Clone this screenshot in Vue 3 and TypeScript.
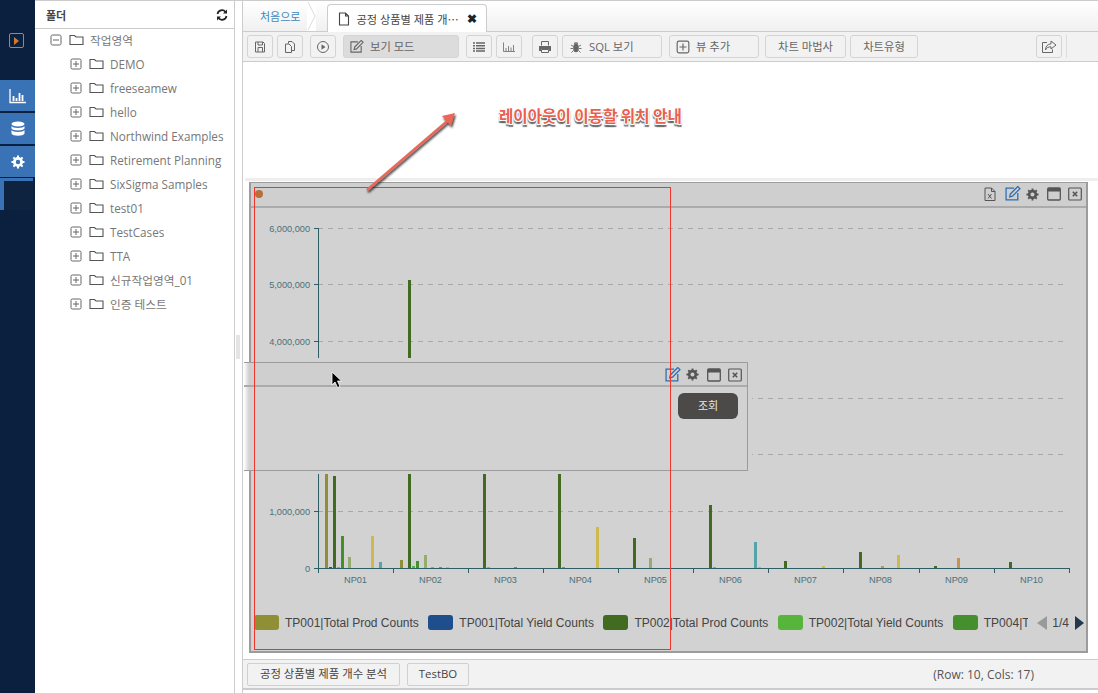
<script setup lang="ts">
interface ToolItem {
  icon?: string;
  label?: string;
  width: number;
  gap: number;
  active?: boolean;
}

interface Bar {
  x: number;
  top: number;
  color: string;
}

const children = [
  'DEMO',
  'freeseamew',
  'hello',
  'Northwind Examples',
  'Retirement Planning',
  'SixSigma Samples',
  'test01',
  'TestCases',
  'TTA',
  '신규작업영역_01',
  '인증 테스트',
];

const isKorean = (name: string) => /[가-힣]/.test(name);

const tools: ToolItem[] = [
  { icon: 'save', width: 26, gap: 4 },
  { icon: 'copy', width: 26, gap: 7 },
  { icon: 'play', width: 26, gap: 7 },
  { icon: 'edit', label: '보기 모드', width: 116, gap: 7, active: true },
  { icon: 'list', width: 26, gap: 4 },
  { icon: 'chart', width: 26, gap: 10 },
  { icon: 'print', width: 26, gap: 4 },
  { icon: 'bug', label: 'SQL 보기', width: 100, gap: 7 },
  { icon: 'plus', label: '뷰 추가', width: 90, gap: 6 },
  { label: '차트 마법사', width: 81, gap: 4 },
  { label: '차트유형', width: 68, gap: 4 },
];

const legend = [
  { name: 'TP001|Total Prod Counts', color: '#8f8f35' },
  { name: 'TP001|Total Yield Counts', color: '#1f4e8c' },
  { name: 'TP002|Total Prod Counts', color: '#426b22' },
  { name: 'TP002|Total Yield Counts', color: '#58b53c' },
  { name: 'TP004|Total Prod Counts', color: '#458f2e' },
];

const OLIVE = '#8f8f35';
const BLUE = '#1f4e8c';
const DARK = '#426b22';
const BRIGHT = '#58b53c';
const GREEN = '#458f2e';
const PALE = '#94ac70';
const YELLOW = '#cdb94e';
const TEAL = '#55a5a8';
const ORANGE = '#c8924e';
const RED = '#b8705a';

const bars: Bar[] = [
  { x: 325, top: 400, color: OLIVE },
  { x: 329, top: 567, color: BLUE },
  { x: 333, top: 476, color: DARK },
  { x: 337, top: 567, color: PALE },
  { x: 341, top: 536, color: GREEN },
  { x: 348, top: 557, color: PALE },
  { x: 371, top: 536, color: YELLOW },
  { x: 379, top: 562, color: TEAL },
  { x: 400, top: 560, color: OLIVE },
  { x: 408, top: 280, color: DARK },
  { x: 412, top: 566, color: BRIGHT },
  { x: 416, top: 561, color: GREEN },
  { x: 424, top: 555, color: PALE },
  { x: 431, top: 567, color: ORANGE },
  { x: 439, top: 567, color: RED },
  { x: 446, top: 567, color: YELLOW },
  { x: 483, top: 400, color: DARK },
  { x: 487, top: 567, color: PALE },
  { x: 514, top: 567, color: RED },
  { x: 558, top: 400, color: DARK },
  { x: 562, top: 567, color: BRIGHT },
  { x: 596, top: 527, color: YELLOW },
  { x: 633, top: 538, color: DARK },
  { x: 649, top: 558, color: PALE },
  { x: 709, top: 505, color: DARK },
  { x: 713, top: 567, color: PALE },
  { x: 754, top: 542, color: TEAL },
  { x: 758, top: 567, color: '#b8b49a' },
  { x: 784, top: 561, color: DARK },
  { x: 822, top: 566, color: YELLOW },
  { x: 859, top: 552, color: DARK },
  { x: 881, top: 566, color: ORANGE },
  { x: 897, top: 555, color: YELLOW },
  { x: 934, top: 566, color: DARK },
  { x: 957, top: 558, color: ORANGE },
  { x: 1009, top: 562, color: DARK },
];

const gridLines = [
  { y: 228, label: '6,000,000' },
  { y: 284, label: '5,000,000' },
  { y: 341, label: '4,000,000' },
  { y: 398, label: '3,000,000' },
  { y: 454, label: '2,000,000' },
  { y: 511, label: '1,000,000' },
];

const xTicks = [318, 393, 468, 543, 618, 693, 768, 843, 919, 994, 1069];
const categories = ['NP01', 'NP02', 'NP03', 'NP04', 'NP05', 'NP06', 'NP07', 'NP08', 'NP09', 'NP10'];
</script>

<template>
  <div class="app">
    <svg class="sprite" aria-hidden="true">
      <symbol id="i-save" viewBox="0 0 14 14"><path d="M2.500 2h7.500l1.500 1.500v8.500h-9z M5 2v3h4.500v-3 M5 12v-4.500h4.500v4.500" fill="none" stroke="currentColor" /></symbol>
      <symbol id="i-copy" viewBox="0 0 14 14"><path d="M5.500 3.500V1.500h3.500l2.500 2.500v6.500H9 M2.500 4h3.500l2.500 2.500V12.500H2.500z" fill="none" stroke="currentColor" /></symbol>
      <symbol id="i-play" viewBox="0 0 14 14"><circle cx="7" cy="7" r="5.500" fill="none" stroke="currentColor" /><path d="M5.500 4.300l4 2.700-4 2.700z" fill="currentColor" /></symbol>
      <symbol id="i-edit" viewBox="1 1 15 15"><path d="M9.500 3H2v11h11V7.500" fill="none" stroke="currentColor" stroke-width="1.200" /><path d="M6 8.500L13 1.500l2 2-7 7-2.600.6z" fill="none" stroke="currentColor" stroke-width="1.200" /></symbol>
      <symbol id="i-list" viewBox="0 0 14 14"><path d="M1 3h2M4 3h9M1 5.700h2M4 5.700h9M1 8.400h2M4 8.400h9M1 11h2M4 11h9" fill="none" stroke="currentColor" stroke-width="1.500" /></symbol>
      <symbol id="i-chart" viewBox="0 0 14 14"><path d="M1.500 2.500V11.500H13" fill="none" stroke="currentColor" stroke-width=".8" /><path d="M4 8v3M6.500 6v5M9 7.500v3.500M11.500 5v6" fill="none" stroke="currentColor" stroke-width=".8" /></symbol>
      <symbol id="i-print" viewBox="0 0 14 14"><path d="M3.500 5.500V1.500h7v4" fill="none" stroke="currentColor" /><path d="M1 6h12v5h-2V9H3v2H1z" fill="currentColor" /><path d="M3.500 9.500h7v3h-7z" fill="none" stroke="currentColor" /></symbol>
      <symbol id="i-bug" viewBox="0 0 14 14"><ellipse cx="7" cy="8" rx="2.800" ry="4.200" fill="currentColor" /><path d="M5.500 2.800h3v1h-3zM2 5l2.500 1.500M12 5L9.500 6.500M1.500 8.500h2.500M12.500 8.500H10M2.500 12.500l2-2M11.500 12.500l-2-2" fill="none" stroke="currentColor" stroke-width=".9" /></symbol>
      <symbol id="i-plus" viewBox="0 0 12 12"><rect x="1" y="1" width="10" height="10" rx="1.500" fill="none" stroke="currentColor" /><path d="M6 3v6M3 6h6" fill="none" stroke="currentColor" /></symbol>
      <symbol id="i-minus" viewBox="0 0 12 12"><rect x="1" y="1" width="10" height="10" rx="1.500" fill="none" stroke="currentColor" /><path d="M3 6h6" fill="none" stroke="currentColor" /></symbol>
      <symbol id="i-share" viewBox="0 0 16 14"><path d="M6 2.500H1.500V12.500H11.500V9.500" fill="none" stroke="currentColor" /><path d="M10 1l5 4-5 4V6.800C7.500 6.800 5.500 7.500 4.500 10c0-3.500 2-6 5.500-6.200z" fill="none" stroke="currentColor" /></symbol>
      <symbol id="i-folder" viewBox="0 0 15 12"><path d="M1 10.500V1.500h4.500l1.500 1.500h7v7.500z" fill="none" stroke="currentColor" stroke-width="1.100" /></symbol>
      <symbol id="i-doc" viewBox="0 0 12 14"><path d="M1.500 1h6l3 3v9h-9z M7.500 1v3h3" fill="none" stroke="currentColor" stroke-width="1.100" /></symbol>
      <symbol id="i-gear" viewBox="0 0 14 14"><circle cx="7" cy="7" r="3.600" fill="none" stroke="currentColor" stroke-width="2.800" /><path d="M7 .5v2.500M7 11v2.500M.5 7H3M11 7h2.500M2.400 2.400l1.800 1.800M9.800 9.800l1.800 1.800M2.400 11.600l1.800-1.800M9.800 4.200l1.800-1.800" fill="none" stroke="currentColor" stroke-width="2" /></symbol>
      <symbol id="i-window" viewBox="0 0 14 14"><rect x=".7" y="1" width="12.600" height="12" rx="1" fill="none" stroke="currentColor" stroke-width="1.300" /><rect x="1" y="1" width="12" height="3.500" fill="currentColor" /></symbol>
      <symbol id="i-close" viewBox="0 0 14 14"><rect x=".7" y="1" width="12.600" height="12" rx="1" fill="none" stroke="currentColor" stroke-width="1.200" /><path d="M4.800 4.800l4.400 4.400M9.200 4.800l-4.400 4.400" fill="none" stroke="currentColor" stroke-width="1.600" /></symbol>
      <symbol id="i-xls" viewBox="0 0 12 14"><path d="M1 1h6.500l3.500 3.500V13.500H1z M7.500 1v3.500H11" fill="none" stroke="currentColor" /><path d="M4 7l3.500 4.500M7.500 7L4 11.500" fill="none" stroke="currentColor" /></symbol>
    </svg>

    <aside class="rail">
      <span class="rail-toggle"><i class="rail-arrow"></i></span>
      <div class="rail-menu">
        <button class="rail-btn">
          <svg width="18" height="16" viewBox="0 0 18 16">
            <path d="M1 1v13.500h16" fill="none" stroke="#fff" stroke-width="1.300" />
            <path d="M4.500 8v5M7.500 10v3M10.500 5v8M13.500 7v6" fill="none" stroke="#fff" stroke-width="1.800" />
          </svg>
        </button>
        <button class="rail-btn">
          <svg width="14" height="16" viewBox="0 0 14 16">
            <ellipse cx="7" cy="3" rx="6.500" ry="2.500" fill="#fff" />
            <path d="M.5 5c1 2.500 12 2.500 13 0v2.500c-1 2.500-12 2.500-13 0zM.5 9c1 2.500 12 2.500 13 0v3.500c-1 3-12 3-13 0z" fill="#fff" />
          </svg>
        </button>
        <button class="rail-btn rail-gear">
          <svg width="14" height="14"><use href="#i-gear" /></svg>
        </button>
        <div class="rail-last"><span></span></div>
      </div>
    </aside>

    <section class="tree">
      <header class="tree-head">
        <strong>폴더</strong>
        <svg width="12" height="12" viewBox="0 0 12 12" class="refresh">
          <path d="M1.500 5A4.500 4.500 0 0 1 9.500 3M10.500 7A4.500 4.500 0 0 1 2.500 9" fill="none" stroke="#222" stroke-width="1.700" />
          <path d="M11 .5V4.500H7zM1 11.500V7.500H5z" fill="#222" />
        </svg>
      </header>
      <div class="node root-node">
        <svg class="box" width="12" height="12"><use href="#i-minus" /></svg>
        <svg class="folder" width="15" height="12"><use href="#i-folder" /></svg>
        <span class="ko">작업영역</span>
      </div>
      <div v-for="name in children" :key="name" class="node child-node">
        <svg class="box" width="12" height="12"><use href="#i-plus" /></svg>
        <svg class="folder" width="15" height="12"><use href="#i-folder" /></svg>
        <span :class="{ ko: isKorean(name) }">{{ name }}</span>
      </div>
    </section>

    <div class="splitter"><i></i></div>

    <main class="main">
      <nav class="tabs">
        <a class="home">처음으로</a>
        <svg class="crumb" width="9" height="30" viewBox="0 0 9 30">
          <path d="M1 1l7 14-7 14" fill="none" stroke="#ddd" />
        </svg>
        <div class="tab">
          <svg width="12" height="14"><use href="#i-doc" /></svg>
          <span>공정 상품별 제품 개⋯</span>
          <b>✖</b>
        </div>
      </nav>

      <div class="toolbar">
        <button
          v-for="(t, i) in tools"
          :key="i"
          class="tool"
          :class="{ active: t.active, labelled: t.icon && t.label, centered: !t.icon }"
          :style="{ width: t.width + 'px', marginRight: t.gap + 'px' }"
        >
          <svg v-if="t.icon" width="14" height="14"><use :href="'#i-' + t.icon" /></svg>
          <span v-if="t.label">{{ t.label }}</span>
        </button>
        <span class="spacer"></span>
        <button class="tool share">
          <svg width="16" height="14"><use href="#i-share" /></svg>
        </button>
        <i class="tool-sep"></i>
      </div>

      <div class="drop-area"></div>
      <div class="band"></div>

      <section class="panel">
        <header class="panel-head">
          <i class="dot"></i>
          <span class="spacer"></span>
          <svg class="ic-xls" width="12" height="14"><use href="#i-xls" /></svg>
          <svg class="ic-edit" width="16" height="16"><use href="#i-edit" /></svg>
          <svg class="ic-gear" width="13" height="13"><use href="#i-gear" /></svg>
          <svg class="ic-win" width="14" height="14"><use href="#i-window" /></svg>
          <svg class="ic-close" width="14" height="14"><use href="#i-close" /></svg>
        </header>

        <svg class="chart" width="835" height="392" viewBox="251 208 835 392">
          <g v-for="g in gridLines" :key="g.y">
            <line x1="318" x2="1066" :y1="g.y + 0.5" :y2="g.y + 0.5" stroke="#a8a8a8" stroke-dasharray="5 5" />
            <line x1="314" x2="318" :y1="g.y + 0.5" :y2="g.y + 0.5" stroke="#2e5d64" />
            <text x="310" :y="g.y + 3.500" text-anchor="end" class="axis-text">{{ g.label }}</text>
          </g>
          <text x="310" y="571.500" text-anchor="end" class="axis-text">0</text>
          <line x1="314" x2="318" y1="568.500" y2="568.500" stroke="#2e5d64" />
          <line x1="318.500" x2="318.500" y1="228" y2="568" stroke="#2e5d64" />
          <rect
            v-for="b in bars"
            :key="b.x"
            :x="b.x"
            :y="b.top"
            width="3"
            :height="568 - b.top"
            :fill="b.color"
          />
          <line x1="318" x2="1070" y1="568.500" y2="568.500" stroke="#2e5d64" />
          <line v-for="t in xTicks" :key="t" :x1="t + 0.5" :x2="t + 0.5" y1="568" y2="573" stroke="#2e5d64" />
          <text v-for="(c, i) in categories" :key="c" :x="xTicks[i] + 37.500" y="583" text-anchor="middle" class="axis-text">{{ c }}</text>
          <!-- area the dragged window clears out -->
          <rect x="251" y="358" width="501" height="116" fill="#d2d2d2" />
        </svg>

        <footer class="legend">
          <div class="legend-track">
            <div v-for="l in legend" :key="l.color" class="legend-item">
              <i :style="{ background: l.color }"></i>
              <span>{{ l.name }}</span>
            </div>
          </div>
          <div class="pager">
            <i class="arrow-left"></i>
            <span>1/4</span>
            <i class="arrow-right"></i>
          </div>
        </footer>
      </section>

      <div class="status">
        <button class="sheet first">공정 상품별 제품 개수 분석</button>
        <button class="sheet second">TestBO</button>
        <span class="spacer"></span>
        <span class="count">(Row: 10, Cols: 17)</span>
      </div>
    </main>

    <!-- things floating over the page while a layout is being dragged -->
    <div class="drag-window">
      <header class="drag-head">
        <span class="spacer"></span>
        <svg class="ic-edit" width="16" height="16"><use href="#i-edit" /></svg>
        <svg class="ic-gear" width="13" height="13"><use href="#i-gear" /></svg>
        <svg class="ic-win" width="14" height="14"><use href="#i-window" /></svg>
        <svg class="ic-close" width="14" height="14"><use href="#i-close" /></svg>
      </header>
      <button class="query">조회</button>
    </div>
    <div class="drop-guide"></div>
    <svg class="pointer" width="13" height="18" viewBox="0 0 13 18">
      <path d="M1 1v13l3-3 2.500 5.500 2.500-1-2.500-5.500H10.500z" fill="#000" stroke="#fff" stroke-width=".8" />
    </svg>
    <svg class="callout-arrow" width="100" height="90" viewBox="0 0 100 90">
      <defs>
        <filter id="drop" x="-20%" y="-20%" width="150%" height="150%">
          <feDropShadow dx="1" dy="2" stdDeviation=".8" flood-color="#222" flood-opacity=".9" />
        </filter>
      </defs>
      <g filter="url(#drop)">
        <path d="M3 84L88 11" stroke="#e8685a" stroke-width="2.500" fill="none" />
        <path d="M91 7L87 20 78 10z" fill="#e8685a" />
      </g>
    </svg>
    <div class="callout-text">레이아웃이 이동할 위치 안내</div>
  </div>
</template>

<style scoped>
.app {
  position: relative;
  display: flex;
  width: 1098px;
  height: 693px;
  overflow: hidden;
  background: #fff;
  font-family: "Open Sans", "Noto Sans CJK KR", sans-serif;
  font-size: 12px;
  color: #555;
}

.sprite {
  position: absolute;
  width: 0;
  height: 0;
}

.spacer {
  flex: 1;
}

button {
  font-family: inherit;
  padding: 0;
}

/* left rail */
.rail {
  flex: 0 0 35px;
  background: #0b1f3f;
  padding-top: 33px;
  box-sizing: border-box;
}

.rail-toggle {
  display: flex;
  align-items: center;
  justify-content: center;
  width: 15px;
  height: 15px;
  margin-left: 9px;
  border: 1.5px solid #d07a30;
  border-radius: 2px;
  box-sizing: border-box;
}

.rail-arrow {
  width: 0;
  height: 0;
  border-left: 5px solid #d07a30;
  border-top: 4px solid transparent;
  border-bottom: 4px solid transparent;
}

.rail-menu {
  margin-top: 32px;
  display: flex;
  flex-direction: column;
}

.rail-btn {
  display: flex;
  align-items: center;
  justify-content: center;
  height: 31px;
  margin-bottom: 2px;
  border: 0;
  background: #3a72b6;
}

.rail-gear {
  color: #fff;
}

.rail-last {
  width: 33px;
  height: 32px;
  margin-top: -1px;
  padding: 3px 0 0 4px;
  background: #3a72b6;
  box-sizing: border-box;
}

.rail-last span {
  display: block;
  height: 100%;
  background: #0d2340;
}

/* folder tree */
.tree {
  flex: 0 0 200px;
  box-sizing: border-box;
  border-top: 1px solid #ccc;
  border-right: 1px solid #ccc;
}

.tree-head {
  display: flex;
  align-items: center;
  justify-content: space-between;
  height: 27px;
  padding: 0 6px 0 11px;
  border-bottom: 1px solid #ccc;
  color: #444;
}

.tree-head strong {
  font-size: 11px;
}

.node {
  display: flex;
  align-items: center;
  height: 24px;
  font-size: 11.7px;
  color: #777;
}

.node .ko {
  padding-bottom: 2px;
}

.root-node {
  padding-left: 15px;
  margin-top: -1px;
}

.child-node {
  padding-left: 35px;
}

.box {
  color: #666;
}

.folder {
  color: #555;
  margin-left: 7px;
  margin-right: 6px;
}

.splitter {
  flex: 0 0 7px;
  position: relative;
  border-top: 1px solid #ccc;
  box-sizing: border-box;
}

.splitter i {
  position: absolute;
  left: 1px;
  top: 334px;
  width: 4px;
  height: 24px;
  background: radial-gradient(circle, #c4c4c4 0.6px, transparent 0.8px) 0 0 / 2px 2px;
}

/* main column */
.main {
  flex: 1;
  min-width: 0;
  display: flex;
  flex-direction: column;
  border-left: 1px solid #ccc;
}

.tabs {
  display: flex;
  align-items: flex-end;
  height: 30px;
  padding-left: 17px;
  border-top: 1px solid #ccc;
  border-bottom: 1px solid #ccc;
  background: linear-gradient(#fff, #f0f0f0);
  position: relative;
}

.home {
  align-self: center;
  color: #3f88bd;
  font-size: 11px;
  margin-right: 7px;
}

.crumb {
  background: #fff;
  margin-right: 11px;
}

.tab {
  display: flex;
  align-items: center;
  width: 160px;
  height: 28px;
  margin-bottom: -1px;
  padding-left: 10px;
  box-sizing: border-box;
  border: 1px solid #ccc;
  border-bottom: 0;
  border-radius: 4px 4px 0 0;
  background: #fff;
  color: #444;
  font-size: 11.2px;
}

.tab svg {
  margin-right: 6px;
  color: #444;
}

.tab b {
  margin-left: 8px;
  font-size: 12px;
  color: #222;
}

.toolbar {
  display: flex;
  align-items: center;
  height: 29px;
  padding-left: 4px;
  border-bottom: 1px solid #ccc;
  background: #f2f2f2;
}

.tool {
  display: flex;
  align-items: center;
  justify-content: center;
  height: 23px;
  flex: none;
  border: 1px solid #d4d4d4;
  border-radius: 3px;
  background: #f2f2f2;
  color: #666;
  font-size: 11.300px;
  box-sizing: border-box;
}

.tool.labelled {
  justify-content: flex-start;
  padding-left: 6px;
}

.tool span {
  padding-bottom: 2px;
}

.tool.labelled span {
  margin-left: 6px;
}

.tool.active {
  background: #dcdcdc;
}

.share {
  width: 26px;
  margin-right: 4px;
}

.tool-sep {
  width: 1px;
  height: 23px;
  background: #ddd;
  margin-right: 31px;
}

.drop-area {
  height: 116px;
}

.band {
  height: 3px;
  margin-left: 2px;
  background: #eee;
}

/* chart panel */
.panel {
  display: flex;
  flex-direction: column;
  height: 471px;
  margin: 1px 10px 0 6px;
  border: 2px solid #9c9c9c;
  border-top-width: 1px;
  box-sizing: border-box;
  background: #d2d2d2;
}

.panel-head,
.drag-head {
  display: flex;
  align-items: center;
  flex: none;
  height: 22px;
  padding-bottom: 1px;
  background: #cfcfcf;
  border-bottom: 2px solid #ababab;
  color: #555;
}

.panel-head {
  padding-left: 4px;
  padding-right: 4px;
}

.dot {
  width: 8px;
  height: 8px;
  border-radius: 50%;
  background: #b86f3a;
}

.ic-xls {
  margin-right: 9px;
}

.ic-edit {
  color: #2f6db0;
  margin-right: 5px;
}

.ic-gear {
  margin-right: 8px;
}

.ic-win {
  margin-right: 7px;
}

.ic-close {
  flex: none;
}

.chart {
  display: block;
  flex: none;
}

.axis-text {
  font-family: "Liberation Sans", Arial, sans-serif;
  font-size: 9.200px;
  fill: #4b7077;
}

.legend {
  flex: 1;
  display: flex;
  align-items: center;
  min-height: 0;
  padding: 0 2px 6px 3px;
  font-family: "Liberation Sans", Arial, sans-serif;
  color: #444;
}

.legend-track {
  flex: 1;
  min-width: 0;
  display: flex;
  gap: 9.500px;
  overflow: hidden;
  white-space: nowrap;
}

.legend-item {
  display: flex;
  align-items: center;
  flex: none;
  gap: 6px;
}

.legend-item i {
  width: 25px;
  height: 15px;
  border-radius: 3px;
}

.pager {
  display: flex;
  align-items: center;
  flex: none;
  margin-left: 9px;
  gap: 5px;
}

.pager span {
  margin-right: 1px;
}

.arrow-left {
  width: 0;
  height: 0;
  border-right: 10px solid #9a9a9a;
  border-top: 7px solid transparent;
  border-bottom: 7px solid transparent;
}

.arrow-right {
  width: 0;
  height: 0;
  border-left: 9px solid #22384d;
  border-top: 7px solid transparent;
  border-bottom: 7px solid transparent;
}

/* bottom bar */
.status {
  display: flex;
  align-items: center;
  height: 28px;
  margin-top: 6px;
  padding-left: 4px;
  border-top: 1px solid #ccc;
  border-bottom: 2px solid #ccc;
  background: #f2f2f2;
}

.sheet {
  height: 23px;
  padding-bottom: 2px;
  border: 1px solid #d0d0d0;
  border-radius: 2px;
  background: #f2f2f2;
  color: #444;
  font-size: 11.400px;
}

.first {
  width: 153px;
  margin-right: 7px;
}

.second {
  width: 62px;
}

.count {
  margin-right: 64px;
  color: #555;
}

/* drag overlay */
.drag-window {
  position: absolute;
  left: 244px;
  top: 362px;
  width: 504px;
  height: 109px;
  box-sizing: border-box;
  border: 1px solid #9c9c9c;
  border-left: 0;
  background: linear-gradient(90deg, #fff 0, #d2d2d2 5px);
}

.drag-head {
  box-sizing: border-box;
  height: 24px;
  padding: 1px 5px 0 0;
  background: linear-gradient(90deg, #fff 0, #cfcfcf 5px);
}

.query {
  position: absolute;
  right: 9px;
  top: 30px;
  width: 60px;
  height: 26px;
  padding-bottom: 2px;
  border: 0;
  border-radius: 6px;
  background: #4c4a48;
  color: #e8e8e8;
  font-size: 11px;
}

.drop-guide {
  position: absolute;
  left: 254px;
  top: 187px;
  width: 417px;
  height: 463px;
  box-sizing: border-box;
  border: 1px solid #f0362a;
}

.pointer {
  position: absolute;
  left: 331px;
  top: 371px;
}

.callout-arrow {
  position: absolute;
  left: 364px;
  top: 106px;
}

.callout-text {
  position: absolute;
  left: 499px;
  top: 103px;
  font-size: 15.600px;
  font-weight: 700;
  line-height: 24px;
  color: #e8604f;
  font-family: "Noto Sans CJK KR", sans-serif;
  text-shadow:
    1px 0 0 #fff, -1px 0 0 #fff, 0 1px 0 #fff, 0 -1px 0 #fff,
    1px 1px 0 #fff, -1px 1px 0 #fff,
    1px 3px 1px #666, -1px 3px 1px #777;
}
</style>

<style>
html,
body {
  margin: 0;
  overflow: hidden;
}
</style>
